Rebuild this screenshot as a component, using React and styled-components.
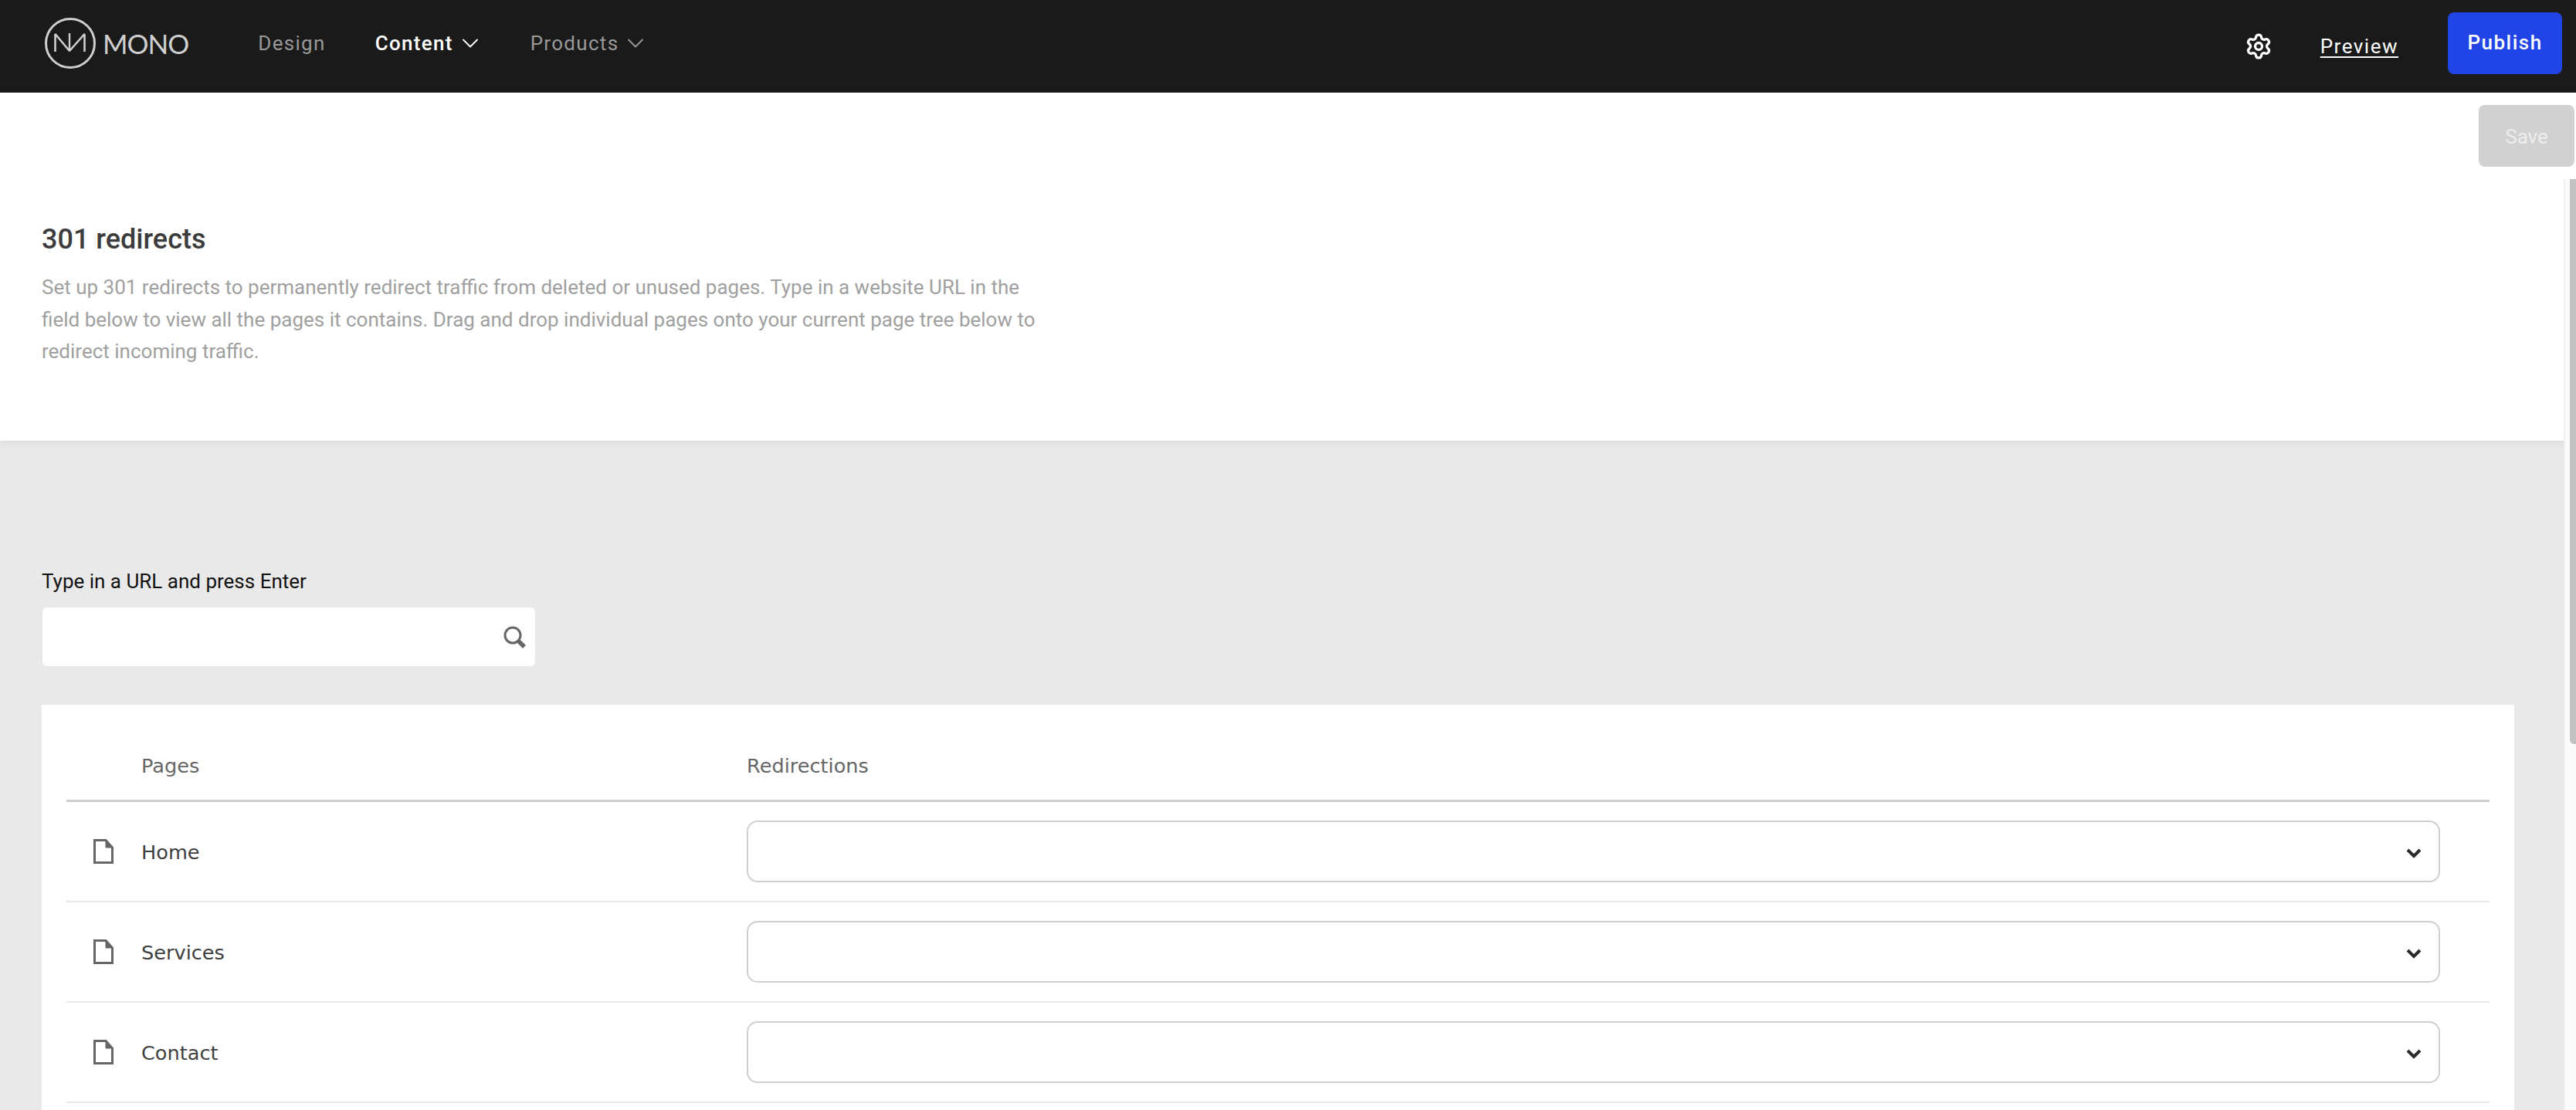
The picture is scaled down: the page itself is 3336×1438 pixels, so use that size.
import React from 'react'
import styled, { createGlobalStyle } from 'styled-components'
import { Settings, ChevronDown } from 'lucide-react'

const GlobalStyle = createGlobalStyle`
  html, body {
    margin: 0;
    height: 100%;
    overflow: hidden;
    background: #e9e9e9;
    font-family: Roboto, "Liberation Sans", sans-serif;
  }
  * { box-sizing: border-box; }
`

const PAGES = ['Home', 'Services', 'Contact']

const Logo = () => (
  <LogoWrap>
    <svg width="68" height="68" viewBox="0 0 68 68" fill="none" stroke="#cfcfcf">
      <circle cx="34" cy="34" r="31.5" strokeWidth="3" />
      <path d="M14.5 45V22L33 44L52.5 22V45" strokeWidth="2.6" strokeLinejoin="bevel" />
      <path d="M33 44V21" strokeWidth="2.4" />
    </svg>
    <LogoName>MONO</LogoName>
  </LogoWrap>
)

const FileIcon = () => (
  <svg width="26" height="32" viewBox="0 0 26 32" fill="none" stroke="#666" strokeWidth="3">
    <path d="M1.5 1.5H16L24.5 11V30.5H1.5Z" />
    <path d="M16 1.5V11H24.5Z" fill="#666" strokeWidth="1" />
  </svg>
)

const SearchIcon = () => (
  <svg width="30" height="29" viewBox="0 0 30 29" fill="none">
    <circle cx="12" cy="12" r="10" stroke="#666" strokeWidth="3" />
    <path d="M19 19L27 27" stroke="#666" strokeWidth="5.4" />
  </svg>
)

const SelectArrow = () => (
  <svg width="20" height="14" viewBox="0 0 20 14" fill="none">
    <path d="M2 3L10 11L18 3" stroke="#2a2a2a" strokeWidth="4" />
  </svg>
)

export default function App() {
  return (
    <Page>
      <GlobalStyle />
      <TopBar>
        <Logo />
        <MainNav>
          <NavItem>Design</NavItem>
          <NavItem $active>
            Content <NavChevron />
          </NavItem>
          <NavItem>
            Products <NavChevron />
          </NavItem>
        </MainNav>
        <TopActions>
          <Settings size={36} color="#fff" strokeWidth={2.2} />
          <PreviewLink>Preview</PreviewLink>
          <PublishButton>Publish</PublishButton>
        </TopActions>
      </TopBar>

      <Intro>
        <SaveRow>
          <SaveButton>Save</SaveButton>
        </SaveRow>
        <IntroTitle>301 redirects</IntroTitle>
        <IntroText>
          Set up 301 redirects to permanently redirect traffic from deleted or unused pages. Type in a
          website URL in the field below to view all the pages it contains. Drag and drop individual
          pages onto your current page tree below to redirect incoming traffic.
        </IntroText>
      </Intro>

      <Content>
        <FieldLabel>Type in a URL and press Enter</FieldLabel>
        <SearchBox>
          <SearchIcon />
        </SearchBox>
        <Card>
          <HeadRow>
            <PagesCell>Pages</PagesCell>
            <RedirectCell>Redirections</RedirectCell>
          </HeadRow>
          {PAGES.map((name) => (
            <PageRow key={name}>
              <IconCell>
                <FileIcon />
              </IconCell>
              <PageName>{name}</PageName>
              <FakeSelect>
                <SelectArrow />
              </FakeSelect>
            </PageRow>
          ))}
        </Card>
      </Content>

      <ScrollTrack>
        <ScrollThumb />
      </ScrollTrack>
    </Page>
  )
}

const Page = styled.div`
  position: relative;
  height: 100vh;
  overflow: hidden;
  background: #e9e9e9;
`

const TopBar = styled.header`
  height: 120px;
  background: #1a1a1a;
  display: flex;
  align-items: center;
  padding: 0 18px 0 57px;
`

const LogoWrap = styled.div`
  display: flex;
  align-items: center;
  gap: 8px;
  margin-top: -8px;
  color: #cfcfcf;
`

const LogoName = styled.span`
  font-family: Lato, sans-serif;
  font-weight: 400;
  font-size: 35px;
  line-height: 1;
  letter-spacing: -1px;
`

const MainNav = styled.nav`
  display: flex;
  align-items: center;
  gap: 64px;
  margin-left: 90px;
  margin-top: -8px;
`

const NavItem = styled.a`
  display: flex;
  align-items: center;
  gap: 4px;
  font-size: 26px;
  letter-spacing: 1.3px;
  font-weight: ${(p) => (p.$active ? 500 : 400)};
  color: ${(p) => (p.$active ? '#fff' : '#999')};
`

const NavChevron = styled(ChevronDown).attrs({ size: 36, strokeWidth: 1.25 })`
  margin-right: -4px;
`

const TopActions = styled.div`
  margin-left: auto;
  display: flex;
  align-items: center;
`

const PreviewLink = styled.a`
  margin-left: 62px;
  font-size: 26px;
  letter-spacing: 1.5px;
  color: #fff;
  text-decoration: underline;
  text-underline-offset: 4px;
`

const PublishButton = styled.button`
  margin-left: 64px;
  width: 148px;
  height: 80px;
  margin-top: -8px;
  padding: 0 0 3px;
  border: 0;
  border-radius: 8px;
  background: #2144e6;
  color: #fff;
  font-family: inherit;
  font-size: 26px;
  font-weight: 500;
  letter-spacing: 1.5px;
`

const Intro = styled.section`
  position: relative;
  height: 451px;
  background: #fff;
  padding: 16px 54px 0;
  box-shadow: 0 2px 10px rgba(0, 0, 0, 0.08);
`

const SaveRow = styled.div`
  display: flex;
  justify-content: flex-end;
  margin-right: -52px;
`

const SaveButton = styled.button`
  width: 124px;
  height: 80px;
  padding: 2px 0 0;
  border: 0;
  border-radius: 8px;
  background: #d1d1d1;
  color: #eee;
  font-family: inherit;
  font-size: 26px;
`

const IntroTitle = styled.h1`
  margin: 72px 0 0;
  font-size: 36px;
  line-height: 44px;
  font-weight: 500;
  color: #3c3c3c;
`

const IntroText = styled.p`
  margin: 20px 0 0;
  width: 1320px;
  font-size: 26px;
  line-height: 41.5px;
  font-weight: 400;
  color: #a0a0a0;
`

const Content = styled.main`
  padding: 162px 80px 0 54px;
`

const FieldLabel = styled.label`
  display: block;
  font-size: 26px;
  line-height: 40px;
  color: #111;
`

const SearchBox = styled.div`
  width: 638px;
  height: 76px;
  margin: 14px 0 0 1px;
  background: #fff;
  border-radius: 6px;
  display: flex;
  align-items: center;
  justify-content: flex-end;
  padding-right: 11px;
`

const Card = styled.div`
  margin-top: 50px;
  padding: 0 32px 60px;
  background: #fff;
`

const rowGrid = `
  display: grid;
  grid-template-columns: 97px 784px 1fr;
  align-items: center;
`

const HeadRow = styled.div`
  ${rowGrid}
  height: 126px;
  padding-top: 34px;
  border-bottom: 3px solid #cfcfcf;
`

const PagesCell = styled.div`
  grid-column: 2;
  font-family: "DejaVu Sans", sans-serif;
  font-size: 25.6px;
  color: #666;
`

const RedirectCell = styled(PagesCell)`
  grid-column: 3;
`

const PageRow = styled.div`
  ${rowGrid}
  height: 130px;
  border-bottom: 2px solid #e9e9e9;
`

const IconCell = styled.div`
  padding-left: 35px;
  display: flex;
`

const PageName = styled.div`
  padding-top: 2px;
  font-family: "DejaVu Sans", sans-serif;
  font-size: 25.6px;
  color: #404040;
`

const FakeSelect = styled.div`
  height: 80px;
  margin-right: 64px;
  border: 2px solid #d0d0d0;
  border-radius: 14px;
  background: #fff;
  display: flex;
  align-items: center;
  justify-content: flex-end;
  padding: 4px 22px 0 0;
`

const ScrollTrack = styled.div`
  position: absolute;
  top: 232px;
  right: 0;
  bottom: 0;
  width: 16px;
  background: #fafafa;
  border-left: 2px solid #f0f0f0;
  display: flex;
  justify-content: flex-end;
`

const ScrollThumb = styled.div`
  width: 8px;
  height: 732px;
  background: #c1c1c1;
  border-radius: 0 0 0 6px;
`
